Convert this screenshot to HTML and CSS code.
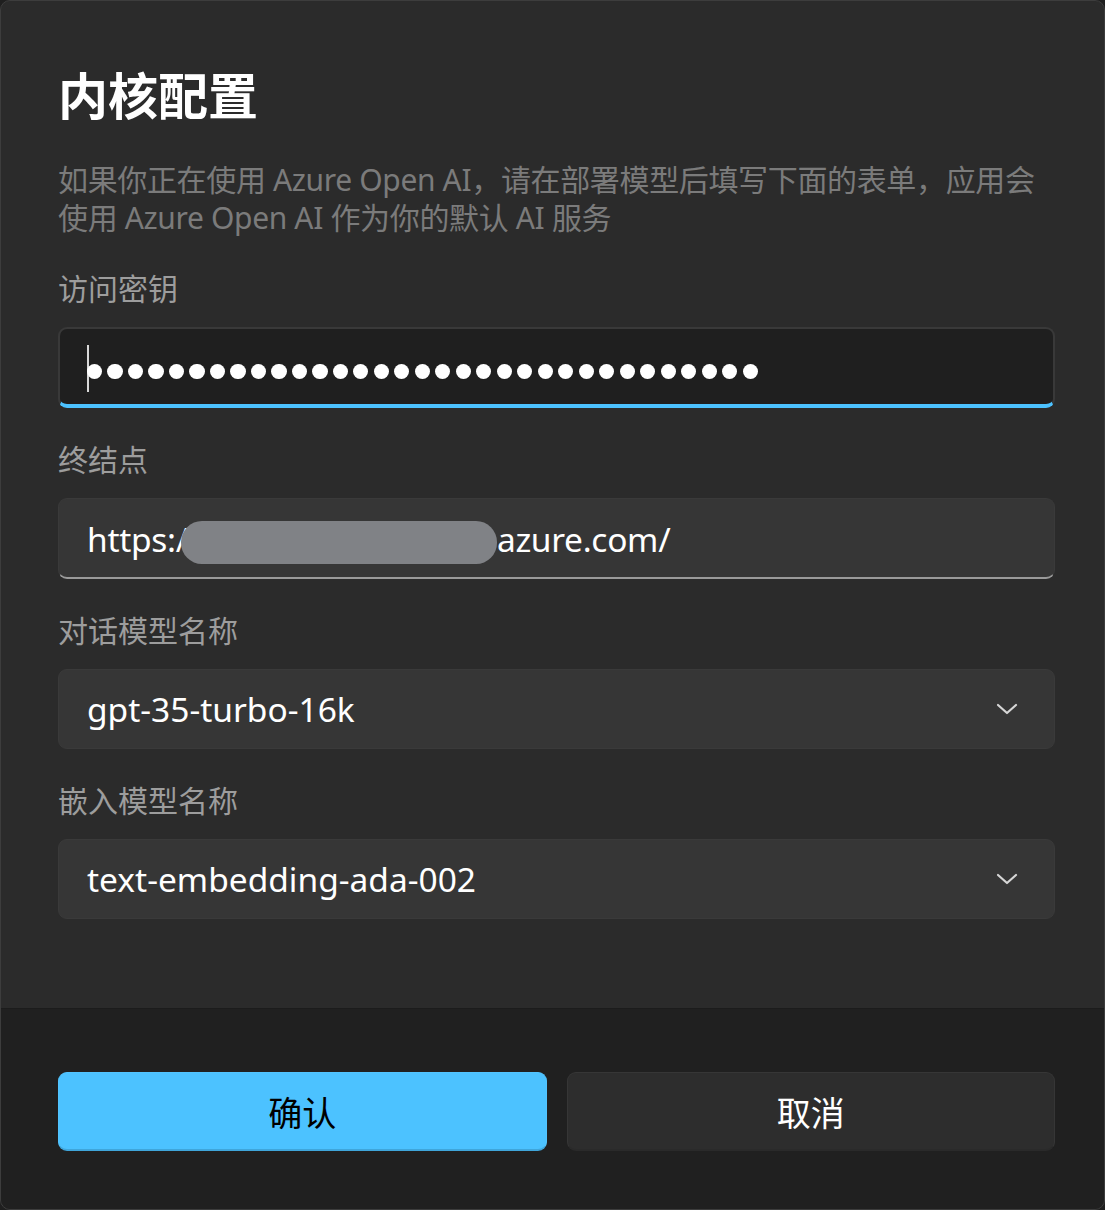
FILE: index.html
```html
<!DOCTYPE html>
<html lang="zh-CN">
<head>
<meta charset="utf-8">
<title>内核配置</title>
<link rel="stylesheet" href="styles.css">
</head>
<body>
<div class="dialog">
  <div class="content">
    <h1 class="title">内核配置</h1>
    <p class="desc">如果你正在使用 Azure Open AI，请在部署模型后填写下面的表单，应用会<br>使用 Azure Open AI 作为你的默认 AI 服务</p>

    <div class="field">
      <div class="label">访问密钥</div>
      <div class="input focused">
        <span class="caret"></span>
        <span class="dots">
          <i></i><i></i><i></i><i></i><i></i><i></i><i></i><i></i><i></i><i></i><i></i><i></i><i></i><i></i><i></i><i></i><i></i><i></i><i></i><i></i><i></i><i></i><i></i><i></i><i></i><i></i><i></i><i></i><i></i><i></i><i></i><i></i><i></i>
        </span>
      </div>
    </div>

    <div class="field">
      <div class="label">终结点</div>
      <div class="input normal">
        <span class="value">https:/<span class="redact"></span>azure.com/</span>
      </div>
    </div>

    <div class="field">
      <div class="label">对话模型名称</div>
      <div class="select">
        <span class="value">gpt-35-turbo-16k</span>
        <svg class="chev" width="22" height="14" viewBox="0 0 22 14"><path d="M2 3 L11 11 L20 3" fill="none" stroke="#d6d6d6" stroke-width="2.2" stroke-linecap="round" stroke-linejoin="round"/></svg>
      </div>
    </div>

    <div class="field">
      <div class="label">嵌入模型名称</div>
      <div class="select">
        <span class="value">text-embedding-ada-002</span>
        <svg class="chev" width="22" height="14" viewBox="0 0 22 14"><path d="M2 3 L11 11 L20 3" fill="none" stroke="#d6d6d6" stroke-width="2.2" stroke-linecap="round" stroke-linejoin="round"/></svg>
      </div>
    </div>
  </div>
  <div class="footer">
    <button class="btn primary">确认</button>
    <button class="btn secondary">取消</button>
  </div>
</div>
</body>
</html>
```
FILE: styles.css
```css
html, body {
  margin: 0;
  padding: 0;
  background: #1f1f1f;
}
body {
  font-family: "Noto Sans", "Noto Sans CJK SC", sans-serif;
}
.dialog {
  width: 1105px;
  height: 1210px;
  box-sizing: border-box;
  display: flex;
  flex-direction: column;
  background: #2b2b2b;
  border: 1px solid #3d3d3d;
  border-radius: 10px;
  overflow: hidden;
}
.content {
  flex: 1;
  padding: 61px 49px 0 57px;
  display: flex;
  flex-direction: column;
}
.title {
  margin: 0;
  font-family: "Noto Sans CJK SC", sans-serif;
  font-weight: 700;
  font-size: 50px;
  line-height: 62px;
  color: #ffffff;
}
.desc {
  margin: 37px 0 0;
  font-size: 30px;
  line-height: 38px;
  letter-spacing: -0.35px;
  color: #7b7b7b;
  white-space: nowrap;
}
.field {
  margin-top: 32px;
  display: flex;
  flex-direction: column;
  gap: 18px;
}
.label {
  font-size: 30px;
  line-height: 40px;
  color: #9d9d9d;
}
.input, .select {
  height: 80px;
  box-sizing: border-box;
  border-radius: 9px;
  display: flex;
  align-items: center;
  padding: 0 28px 0 28px;
  color: #ffffff;
  font-size: 33.5px;
}
.input.focused {
  background: #1f1f1f;
  border: 2px solid #393939;
  border-bottom: 4px solid #4cc2ff;
  height: 81px;
  padding-left: 27px;
}
.input.normal {
  background: #363636;
  border: 1px solid #3a3a3a;
  border-bottom: 2px solid #9a9a9a;
  height: 81px;
}
.caret {
  width: 2px;
  height: 47px;
  background: #d8d8d8;
  margin-top: 4px;
}
.dots {
  display: flex;
  gap: 5.3px;
  margin-left: -2px;
  margin-top: 10px;
}
.dots i {
  display: block;
  width: 15.2px;
  height: 15.2px;
  border-radius: 50%;
  background: #ffffff;
}
.value {
  display: flex;
  align-items: center;
  white-space: nowrap;
  line-height: 40px;
  margin-top: 2px;
}
.input.normal .value {
  letter-spacing: -0.3px;
}
.redact {
  display: inline-block;
  width: 316px;
  height: 43px;
  border-radius: 21px;
  background: #808286;
  margin-left: -7px;
  margin-top: 6px;
}
.select {
  background: #363636;
  border: 1px solid #3a3a3a;
  height: 80px;
  justify-content: space-between;
}
.select .value {
  margin-top: 0;
}
.chev {
  margin-right: 8px;
}
.footer {
  height: 201px;
  box-sizing: border-box;
  background: #202020;
  border-top: 1px solid #1c1c1c;
  padding: 63px 49px 0 57px;
  display: flex;
  gap: 20px;
}
.btn {
  flex: 1;
  height: 79px;
  border-radius: 9px;
  font-family: "Noto Sans CJK SC", sans-serif;
  font-size: 34px;
  cursor: pointer;
}
.primary {
  background: #4cc2ff;
  color: #000000;
  border: 1px solid #52c4ff;
  border-bottom: 2px solid #3fa6db;
}
.secondary {
  background: #2d2d2d;
  color: #ffffff;
  border: 1px solid #363636;
  border-bottom: 2px solid #2a2a2a;
}
```
